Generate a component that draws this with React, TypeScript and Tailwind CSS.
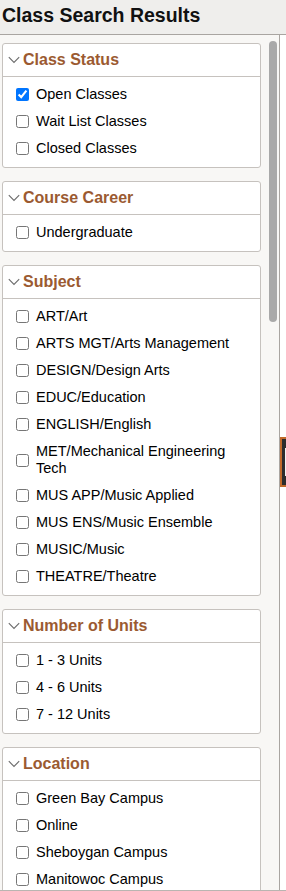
import React from "react";

type Group = {
  title: string;
  items: { label: string; checked?: boolean }[];
};

const groups: Group[] = [
  {
    title: "Class Status",
    items: [{ label: "Open Classes", checked: true }, { label: "Wait List Classes" }, { label: "Closed Classes" }],
  },
  { title: "Course Career", items: [{ label: "Undergraduate" }] },
  {
    title: "Subject",
    items: [
      { label: "ART/Art" },
      { label: "ARTS MGT/Arts Management" },
      { label: "DESIGN/Design Arts" },
      { label: "EDUC/Education" },
      { label: "ENGLISH/English" },
      { label: "MET/Mechanical Engineering Tech" },
      { label: "MUS APP/Music Applied" },
      { label: "MUS ENS/Music Ensemble" },
      { label: "MUSIC/Music" },
      { label: "THEATRE/Theatre" },
    ],
  },
  {
    title: "Number of Units",
    items: [{ label: "1 - 3 Units" }, { label: "4 - 6 Units" }, { label: "7 - 12 Units" }],
  },
  {
    title: "Location",
    items: [
      { label: "Green Bay Campus" },
      { label: "Online" },
      { label: "Sheboygan Campus" },
      { label: "Manitowoc Campus" },
    ],
  },
];

function Chevron() {
  return (
    <svg width="12" height="8" viewBox="0 0 12 8" className="shrink-0" aria-hidden="true">
      <path d="M0.8 1.2 L6 6.4 L11.2 1.2" fill="none" stroke="#6b6b6b" strokeWidth="1.1" />
    </svg>
  );
}

function FilterCard({ group }: { group: Group }) {
  return (
    <section className="w-[259px] rounded-[3px] border border-[#c6c2be] bg-white">
      <header className="flex h-[33px] items-center gap-[3px] border-b border-[#c6c2be] pl-[5px]">
        <Chevron />
        <h2 className="text-[16px] font-bold text-[#9b5a31]">{group.title}</h2>
      </header>
      <ul className="pt-[4px] pb-[5px]">
        {group.items.map((item) => (
          <li key={item.label} className="flex items-center py-[5px] pl-[13px] pr-2">
            <input
              type="checkbox"
              defaultChecked={item.checked}
              className="m-0 h-[13px] w-[13px] shrink-0"
            />
            <span className="ml-[7px] text-[14.5px] leading-[17px] text-black">{item.label}</span>
          </li>
        ))}
      </ul>
    </section>
  );
}

export default function App() {
  return (
    <div
      className="flex h-[891px] w-[286px] flex-col overflow-hidden bg-white"
      style={{ fontFamily: '"Liberation Sans", Arial, sans-serif' }}
    >
      <div className="h-[35px] shrink-0 border-b border-[#a9a5a1] bg-[#efeeec] pl-[2px] pt-[2px]">
        <h1 className="text-[19.5px] font-bold leading-[26px] text-[#111]">Class Search Results</h1>
      </div>
      <div className="flex min-h-0 flex-1 border-b border-[#b9b5b1]">
        <div className="flex w-[280px] shrink-0 border-r border-[#a9a5a1] bg-[#f8f7f5]">
          <div className="flex flex-col gap-[13px] overflow-hidden pl-[2px] pt-[8px]">
            {groups.map((g) => (
              <FilterCard key={g.title} group={g} />
            ))}
          </div>
          <div className="ml-[8px] pt-[6px]">
            <div className="h-[281px] w-[8px] rounded-full bg-[#a9a9a9]" />
          </div>
        </div>
        <div className="flex-1 pt-[402px]">
          <div className="flex h-[50px] items-center border-y-2 border-l-2 border-[#c0692a] bg-[#2d2d2d] pl-[3px]">
            <div className="h-[28px] w-[3px] bg-[#f2f2f2]" />
          </div>
        </div>
      </div>
    </div>
  );
}
